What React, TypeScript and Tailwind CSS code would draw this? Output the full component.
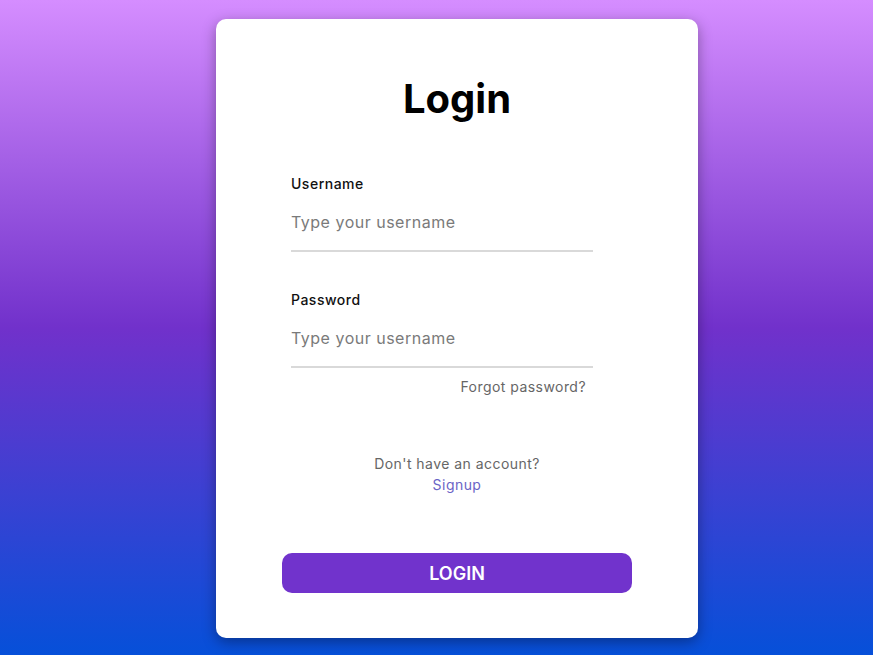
import React from 'react';

const App: React.FC = () => {
  return (
    <div
      className="h-[655px] w-full overflow-hidden pt-[19px] bg-[linear-gradient(to_bottom,#d58dff_0%,#7131cb_50%,#0650d9_100%)]"
      style={{ fontFamily: 'Inter, "Noto Sans", sans-serif' }}
    >
      <div className="ml-[216px] w-[482px] h-[619px] bg-white rounded-[10px] shadow-[0_4px_14px_rgba(0,0,0,0.35)] flex flex-col">
        <h1 className="mt-[56px] text-center text-[40px] leading-[48px] font-bold text-black">Login</h1>

        <form className="ml-[75px] w-[302px] flex flex-col" onSubmit={e => e.preventDefault()}>
          <label className="mt-[51px] text-[14px] leading-[20px] font-medium tracking-[0.5px] text-[#111]">Username</label>
          <input
            type="text"
            placeholder="Type your username"
            className="h-[58px] w-full border-b-2 border-[#d9d9d9] text-[16px] tracking-[0.5px] text-[#333] placeholder:text-[#7a7a7a] outline-none"
          />

          <label className="mt-[38px] text-[14px] leading-[20px] font-medium tracking-[0.5px] text-[#111]">Password</label>
          <input
            type="password"
            placeholder="Type your username"
            className="h-[58px] w-full border-b-2 border-[#d9d9d9] text-[16px] tracking-[0.5px] text-[#333] placeholder:text-[#7a7a7a] outline-none"
          />

          <a href="#" className="mt-[9px] pr-[7px] text-right text-[14px] leading-[20px] tracking-[0.45px] text-[#666]">
            Forgot password?
          </a>
        </form>

        <div className="mt-[56px] flex flex-col items-center text-[14px] leading-[21px] tracking-[0.45px]">
          <span className="text-[#666]">Don't have an account?</span>
          <a href="#" className="text-[#6a64c6]">Signup</a>
        </div>

        <button
          type="button"
          className="mt-[58px] ml-[66px] w-[350px] h-[40px] rounded-[10px] bg-[#7133cc] text-white text-[18px] font-semibold"
        >
          LOGIN
        </button>
      </div>
    </div>
  );
};

export default App;
